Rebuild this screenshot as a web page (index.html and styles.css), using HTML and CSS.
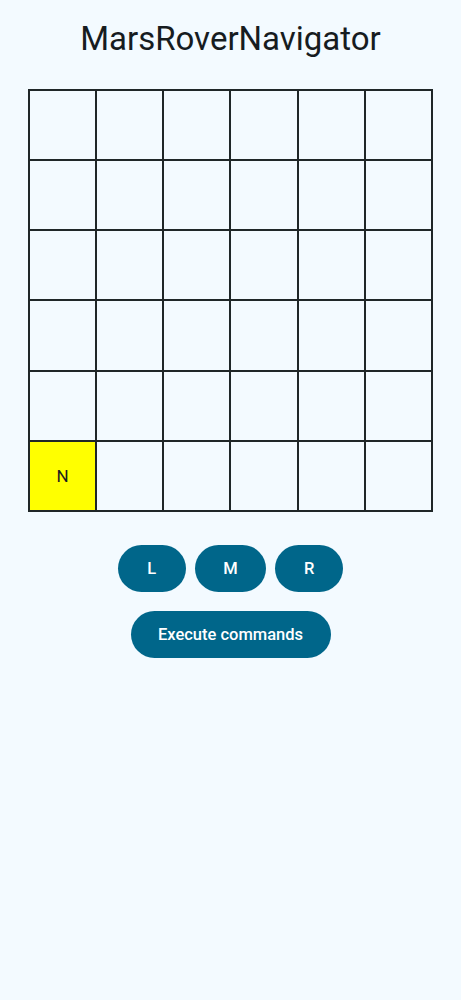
FILE: index.html
```html
<!DOCTYPE html>
<html>
<head>
<meta charset="utf-8">
<link rel="stylesheet" href="styles.css">
</head>
<body>
<div class="app">
  <h1 class="title">MarsRoverNavigator</h1>
  <div class="grid">
    <div class="cell"></div><div class="cell"></div><div class="cell"></div><div class="cell"></div><div class="cell"></div><div class="cell"></div>
    <div class="cell"></div><div class="cell"></div><div class="cell"></div><div class="cell"></div><div class="cell"></div><div class="cell"></div>
    <div class="cell"></div><div class="cell"></div><div class="cell"></div><div class="cell"></div><div class="cell"></div><div class="cell"></div>
    <div class="cell"></div><div class="cell"></div><div class="cell"></div><div class="cell"></div><div class="cell"></div><div class="cell"></div>
    <div class="cell"></div><div class="cell"></div><div class="cell"></div><div class="cell"></div><div class="cell"></div><div class="cell"></div>
    <div class="cell rover">N</div><div class="cell"></div><div class="cell"></div><div class="cell"></div><div class="cell"></div><div class="cell"></div>
  </div>
  <div class="controls">
    <button class="btn btn-small">L</button>
    <button class="btn btn-small">M</button>
    <button class="btn btn-small">R</button>
  </div>
  <div class="controls controls-exec">
    <button class="btn btn-exec">Execute commands</button>
  </div>
</div>
</body>
</html>
```
FILE: styles.css
```css
html, body {
  margin: 0;
  padding: 0;
  background: #f3faff;
}
body {
  font-family: Roboto, "Noto Sans", sans-serif;
  color: #171c1f;
}
.app {
  display: flex;
  flex-direction: column;
  align-items: center;
  padding-top: 19px;
}
.title {
  margin: 0;
  font-size: 33px;
  font-weight: 400;
  line-height: 40px;
  letter-spacing: 0;
}
.grid {
  margin-top: 30px;
  width: 405px;
  height: 423px;
  box-sizing: border-box;
  background: #1f2628;
  padding: 2px;
  display: grid;
  grid-template-columns: repeat(6, 1fr);
  grid-template-rows: repeat(6, 1fr);
  gap: 2px;
}
.cell {
  background: #f3faff;
  display: flex;
  align-items: center;
  justify-content: center;
  font-size: 17px;
}
.rover {
  background: #ffff00;
}
.controls {
  display: flex;
  gap: 9px;
  margin-top: 33px;
}
.controls-exec {
  margin-top: 19px;
}
.btn {
  border: none;
  background: #00668a;
  color: #ffffff;
  font-family: Roboto, "Noto Sans", sans-serif;
  font-weight: 500;
  font-size: 16.5px;
  height: 47px;
  border-radius: 24px;
  padding: 0 28.5px;
  white-space: nowrap;
}
.btn-small {
  min-width: 68px;
}
.btn-exec {
  width: 200px;
  padding: 0;
}
```
